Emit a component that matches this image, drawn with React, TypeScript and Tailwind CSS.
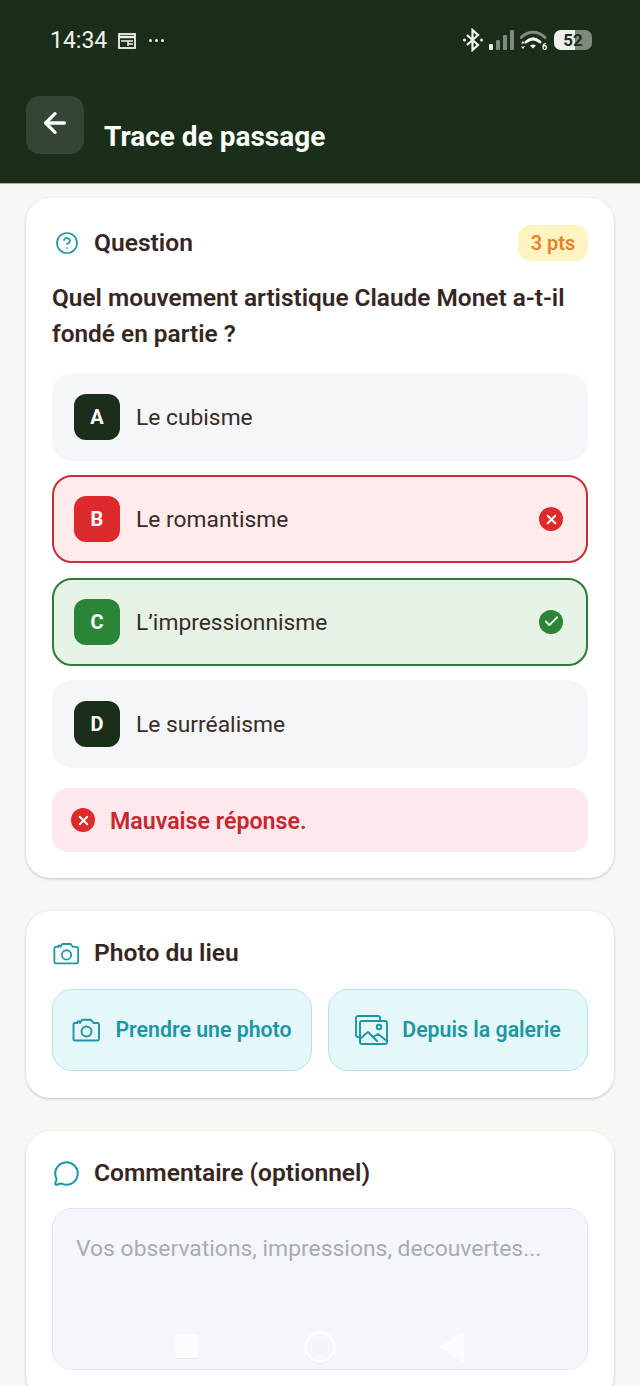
import { ArrowLeft, Check, CircleHelp, MessageCircle, X } from "lucide-react"
import React from "react"

const options = [
  { letter: "A", label: "Le cubisme", state: "idle" },
  { letter: "B", label: "Le romantisme", state: "wrong" },
  { letter: "C", label: "L’impressionnisme", state: "right" },
  { letter: "D", label: "Le surréalisme", state: "idle" },
]

const CameraIcon = ({ width, height }: { width: number; height: number }) => (
  <svg width={width} height={height} viewBox="0 0 29 24" fill="none" stroke="currentColor" strokeWidth="1.900" strokeLinejoin="round">
    <path d="M1.500 6.500a1.500 1.500 0 0 1 1.500-1.500h2.500V3.500h2.500V5l2-3.200h9l2.500 3.200h4a1.500 1.500 0 0 1 1.500 1.500v14.500a1.500 1.500 0 0 1-1.500 1.500H3a1.500 1.500 0 0 1-1.500-1.500z" />
    <circle cx="14.500" cy="13.500" r="5" />
  </svg>
)

const GalleryIcon = () => (
  <svg width="33" height="30" viewBox="0 0 33 30" fill="none" stroke="currentColor" strokeWidth="1.900" strokeLinejoin="round" strokeLinecap="round">
    <path d="M4.500 22H3a2 2 0 0 1-2-2V3a2 2 0 0 1 2-2h20a2 2 0 0 1 2 2v2" />
    <rect x="5" y="6" width="27" height="23" rx="2" />
    <circle cx="24" cy="12" r="2.300" />
    <path d="M5 24l8-7 9 9M18 22l5-3 9 7" />
  </svg>
)

const StatusIcons = () => (
  <div className="flex items-center">
    <svg width="22" height="24" viewBox="0 0 22 24" fill="none" stroke="#f4f6f2" strokeWidth="2.200">
      <path d="M5 7l11 10-5.500 5V2L16 7 5 17" />
      <circle cx="2.500" cy="12" r="1.500" fill="#f4f6f2" stroke="none" />
      <circle cx="19.500" cy="12" r="1.500" fill="#f4f6f2" stroke="none" />
    </svg>
    <svg className="ml-[5px]" width="25" height="22" viewBox="0 0 25 22">
      <rect x="0" y="15" width="4" height="6" rx="1" fill="#f2f4f0" />
      <rect x="7" y="11" width="4" height="10" rx="1" fill="#808a7e" />
      <rect x="14" y="6" width="4" height="15" rx="1" fill="#808a7e" />
      <rect x="21" y="1" width="4" height="20" rx="1" fill="#808a7e" />
    </svg>
    <svg className="ml-[6px]" width="28" height="22" viewBox="0 0 28 22" fill="none">
      <path d="M1 8.500C8 1.500 18 1.500 25 8.500" stroke="#808a7e" strokeWidth="3" strokeLinecap="round" />
      <path d="M6 13c4.500-4 9.500-4 14 0" stroke="#f4f6f2" strokeWidth="3" strokeLinecap="round" />
      <path d="M10 16.500l3 3 3-3c-2-1.500-4-1.500-6 0z" fill="#f4f6f2" />
      <path d="M3 12l-2 2.500h4zM3 20l-2-2.500h4z" fill="#f4f6f2" />
      <text x="22" y="21" fontSize="9" fontWeight="700" fill="#f4f6f2" fontFamily="Roboto, sans-serif">6</text>
    </svg>
    <div className="relative ml-[6px] flex h-[20px] w-[38px] items-center justify-center overflow-hidden rounded-[7px] bg-[#7f897d] text-[17px] font-bold leading-none text-[#1b2e1a]">
      <div className="absolute inset-y-0 left-0 w-[21px] bg-[#eef0ec]" />
      <span className="relative">52</span>
    </div>
  </div>
)

const SectionTitle = ({ icon, title }: { icon: React.ReactNode; title: string }) => (
  <div className="flex items-center">
    <div className="flex w-[42px] items-center">{icon}</div>
    <h2 className="text-[24.600px] font-semibold leading-[32px] text-[#36261f]">{title}</h2>
  </div>
)

const OptionRow = ({ letter, label, state }: { letter: string; label: string; state: string }) => {
  let row = "bg-[#f4f6fa] pl-[22px] pr-[26px]"
  let badge = "bg-[#1b2e1a]"
  if (state === "wrong") {
    row = "bg-[#ffeaec] border-2 border-[#c62f35] pl-[20px] pr-[23px]"
    badge = "bg-[#de2a2d]"
  }
  if (state === "right") {
    row = "bg-[#e6f3e7] border-2 border-[#2e7d34] pl-[20px] pr-[23px]"
    badge = "bg-[#2b8437]"
  }
  return (
    <div className={`flex h-[88px] items-center justify-between rounded-[20px] ${row}`}>
      <div className="flex items-center gap-4">
        <div className={`flex h-[46px] w-[46px] items-center justify-center rounded-[12px] text-[20px] font-bold text-white ${badge}`}>
          {letter}
        </div>
        <span className="mt-[2px] text-[22.800px] leading-[30px] text-[#3a2b25]">{label}</span>
      </div>
      {state === "wrong" && (
        <div className="flex h-[24px] w-[24px] items-center justify-center rounded-full bg-[#de2a2d]">
          <X size={15} color="white" strokeWidth={3} />
        </div>
      )}
      {state === "right" && (
        <div className="flex h-[24px] w-[24px] items-center justify-center rounded-full bg-[#2b8437]">
          <Check size={17} color="white" strokeWidth={2.500} />
        </div>
      )}
    </div>
  )
}

const PhotoButton = ({ icon, label }: { icon: React.ReactNode; label: string }) => (
  <button className="flex h-[82px] flex-1 items-center justify-center gap-[14px] rounded-[20px] border border-[#b4e3ea] bg-[#e5f7f9] text-[21.300px] font-semibold text-[#1a97a6]">
    {icon}
    {label}
  </button>
)

export default function App() {
  return (
    <div className="relative h-[1386px] w-[640px] overflow-hidden bg-[#f7f8f3] font-['Roboto',sans-serif]">
      <header className="h-[184px] border-b border-[#a9b3a2] bg-[#1b2e1a] px-[26px]">
        <div className="flex h-[80px] items-center justify-between pl-[24px] pr-[22px]">
          <div className="flex items-center text-[#f0f2ee]">
            <span className="text-[23px] leading-none">14:34</span>
            <svg className="ml-[11px]" width="18" height="17" viewBox="0 0 18 17" fill="none" stroke="#f0f2ee" strokeWidth="1.800">
              <rect x="1" y="2" width="16" height="14" />
              <path d="M1 5h16" strokeWidth="2.500" />
              <path d="M3 9h12M10 9v5M10 12h5" strokeWidth="1.500" />
            </svg>
            <div className="ml-[13px] flex gap-[3px]">
              <span className="h-[3px] w-[3px] rounded-full bg-[#f0f2ee]" />
              <span className="h-[3px] w-[3px] rounded-full bg-[#f0f2ee]" />
              <span className="h-[3px] w-[3px] rounded-full bg-[#f0f2ee]" />
            </div>
          </div>
          <StatusIcons />
        </div>
        <div className="mt-[16px] flex">
          <button className="flex h-[58px] w-[58px] items-start justify-center rounded-[14px] bg-[#344534] pt-[11px]">
            <ArrowLeft size={32} color="white" strokeWidth={2.500} />
          </button>
          <h1 className="ml-[20px] mt-[23px] text-[28px] font-bold leading-[36px] text-white">Trace de passage</h1>
        </div>
      </header>

      <main className="flex flex-col gap-[33px] px-[26px] pt-[14px]">
        <section className="rounded-[24px] bg-white px-[26px] pb-[26px] pt-[27px] shadow-[0_1px_3px_rgba(0,0,0,0.22)]">
          <div className="flex h-[36px] items-center justify-between">
            <SectionTitle
              icon={
                <span className="pl-[3px]">
                  <CircleHelp size={24} color="#1f97a3" strokeWidth={1.700} />
                </span>
              }
              title="Question"
            />
            <span className="flex h-[36px] w-[70px] items-center justify-center rounded-[13px] bg-[#fff4c0] text-[20px] font-semibold text-[#e8802a]">
              3 pts
            </span>
          </div>
          <p className="mt-[19px] text-[24.400px] font-semibold leading-[36px] text-[#36261f]">
            Quel mouvement artistique Claude Monet a-t-il fondé en partie ?
          </p>
          <div className="mt-[21px] flex flex-col gap-[14.400px]">
            {options.map(o => (
              <OptionRow key={o.letter} letter={o.letter} label={o.label} state={o.state} />
            ))}
          </div>
          <div className="mt-[20px] flex h-[64px] items-center gap-[15px] rounded-[16px] bg-[#fde8eb] px-[19px]">
            <div className="flex h-[24px] w-[24px] items-center justify-center rounded-full bg-[#de2a2d]">
              <X size={15} color="white" strokeWidth={3} />
            </div>
            <span className="mt-[2px] text-[23.200px] font-semibold text-[#c8272f]">Mauvaise réponse.</span>
          </div>
        </section>

        <section className="rounded-[24px] bg-white px-[26px] pb-[27px] pt-[26px] shadow-[0_1px_3px_rgba(0,0,0,0.22)]">
          <SectionTitle
            icon={
              <span className="pl-[1px] text-[#1f97a3]">
                <CameraIcon width={27} height={23} />
              </span>
            }
            title="Photo du lieu"
          />
          <div className="mt-[20px] flex gap-4">
            <PhotoButton icon={<CameraIcon width={29} height={24} />} label="Prendre une photo" />
            <PhotoButton icon={<GalleryIcon />} label="Depuis la galerie" />
          </div>
        </section>

        <section className="rounded-[24px] bg-white px-[26px] pb-[30px] pt-[26px] shadow-[0_1px_3px_rgba(0,0,0,0.22)]">
          <SectionTitle
            icon={
              <span className="pl-[1px]">
                <MessageCircle size={27} color="#1f97a3" strokeWidth={1.800} />
              </span>
            }
            title="Commentaire (optionnel)"
          />
          <div className="mt-[19px] h-[162px] rounded-[20px] border border-[#e2e6ef] bg-[#f4f6fb] px-[23px] py-[24px] text-[22.900px] leading-[32px] text-[#a9acb1]">
            Vos observations, impressions, decouvertes...
          </div>
        </section>
      </main>

      {/* android nav bar, overlaid */}
      <div className="absolute left-[175px] top-[1334px] h-[24px] w-[24px] rounded-[4px] bg-[#fbfcfe] shadow-[0_1px_1px_rgba(0,0,0,0.06)]" />
      <div className="absolute left-[304px] top-[1331px] flex h-[32px] w-[32px] items-center justify-center rounded-full border-[3px] border-[#fbfcfe] shadow-[0_1px_1px_rgba(0,0,0,0.05)]">
        <div className="h-[16px] w-[16px] rounded-full bg-[#f2f4f8]" />
      </div>
      <svg className="absolute left-[439px] top-[1331px]" width="26" height="32" viewBox="0 0 26 32">
        <path d="M24 2v28L2 16z" fill="#fbfcfe" stroke="#fbfcfe" strokeWidth="2" strokeLinejoin="round" />
      </svg>
    </div>
  )
}
